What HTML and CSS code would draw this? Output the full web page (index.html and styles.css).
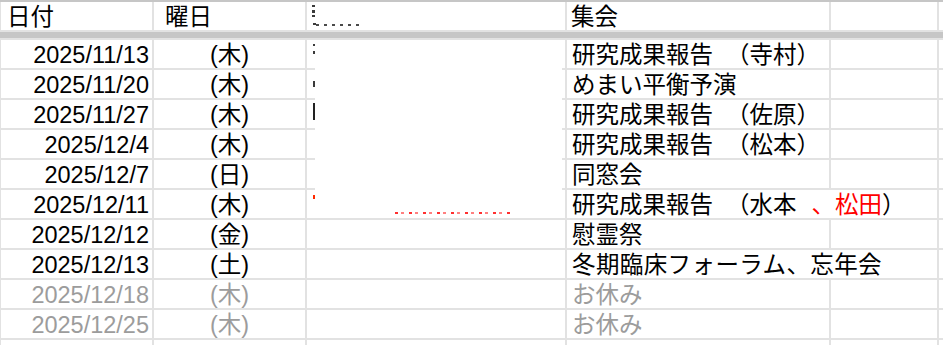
FILE: index.html
```html
<!DOCTYPE html>
<html lang="ja">
<head>
<meta charset="utf-8">
<title>集会予定</title>
<link rel="stylesheet" href="styles.css">
</head>
<body>
<div class="sheet">
  <div class="row">
    <div class="c h1">日付</div>
    <div class="c h2">曜日</div>
    <div class="c"></div>
    <div class="c h4">集会</div>
    <div class="c"></div>
    <div class="c"></div>
  </div>
  <div class="freeze"></div>

  <div class="row">
    <div class="c date">2025/11/13</div><div class="c dow">(木)</div><div class="c"></div>
    <div class="c ev">研究成果報告<span class="sp1">（寺村）</span></div><div class="c"></div><div class="c"></div>
  </div>
  <div class="row">
    <div class="c date">2025/11/20</div><div class="c dow">(木)</div><div class="c"></div>
    <div class="c ev">めまい平衡予演</div><div class="c"></div><div class="c"></div>
  </div>
  <div class="row">
    <div class="c date">2025/11/27</div><div class="c dow">(木)</div><div class="c"></div>
    <div class="c ev">研究成果報告<span class="sp1">（佐原）</span></div><div class="c"></div><div class="c"></div>
  </div>
  <div class="row">
    <div class="c date">2025/12/4</div><div class="c dow">(木)</div><div class="c"></div>
    <div class="c ev">研究成果報告<span class="sp1">（松本）</span></div><div class="c"></div><div class="c"></div>
  </div>
  <div class="row">
    <div class="c date">2025/12/7</div><div class="c dow">(日)</div><div class="c"></div>
    <div class="c ev">同窓会</div><div class="c"></div><div class="c"></div>
  </div>
  <div class="row">
    <div class="c date">2025/12/11</div><div class="c dow">(木)</div><div class="c"></div>
    <div class="c ev wide">研究成果報告<span class="sp1">（水本</span><span class="red sp2">、松田</span>）</div><div class="c"></div>
  </div>
  <div class="row">
    <div class="c date">2025/12/12</div><div class="c dow">(金)</div><div class="c"></div>
    <div class="c ev">慰霊祭</div><div class="c"></div><div class="c"></div>
  </div>
  <div class="row">
    <div class="c date">2025/12/13</div><div class="c dow">(土)</div><div class="c"></div>
    <div class="c ev wide loose">冬期臨床フォーラム、忘年会</div><div class="c"></div>
  </div>
  <div class="row muted">
    <div class="c date">2025/12/18</div><div class="c dow">(木)</div><div class="c"></div>
    <div class="c ev">お休み</div><div class="c"></div><div class="c"></div>
  </div>
  <div class="row muted">
    <div class="c date">2025/12/25</div><div class="c dow">(木)</div><div class="c"></div>
    <div class="c ev">お休み</div><div class="c"></div><div class="c"></div>
  </div>
  <div class="row">
    <div class="c"></div><div class="c"></div><div class="c"></div>
    <div class="c"></div><div class="c"></div><div class="c"></div>
  </div>

  <div class="redact"></div>
  <span class="frag f1"></span>
  <span class="frag f2"></span>
  <span class="frag f3"></span>
  <span class="frag f4"></span>
  <span class="frag f5"></span>
  <span class="frag f6"></span>
  <span class="frag f7"></span>
  <span class="frag f8"></span>
  <span class="frag f9"></span>
  <span class="frag fr1"></span>
  <span class="frag fr2"></span>
</div>
</body>
</html>
```

FILE: styles.css
```css
html, body {
  margin: 0;
  padding: 0;
  background: #ffffff;
}

.sheet {
  position: relative;
  width: 943px;
  height: 343px;
  overflow: hidden;
  border-top: 2px solid #c6c6c6;
  background: #e2e2e2;
  display: flex;
  flex-direction: column;
  gap: 2px;
}

.row {
  flex: none;
  display: grid;
  grid-template-columns: 151px 151px 258px 262px 106px 1fr;
  column-gap: 2px;
  padding-left: 1px;
  height: 28px;
}

.freeze {
  flex: none;
  height: 6px;
  background: #c6c6c6;
}

.c {
  background: #ffffff;
  height: 28px;
  font-family: "Liberation Sans", "Noto Sans CJK JP", sans-serif;
  font-size: 23.5px;
  line-height: 30.5px;
  color: #000000;
  white-space: pre;
  overflow: visible;
}

.h1 { padding-left: 6px; }
.h2 { padding-left: 11px; }
.h4 { padding-left: 4px; }

.date {
  text-align: right;
  padding-right: 3px;
}

.dow {
  text-align: center;
}

.ev {
  padding-left: 5px;
}

/* text that overflows into the next (empty) column hides the border */
.wide {
  grid-column: span 2;
}

.loose {
  letter-spacing: 0.4px;
}

.sp1 { margin-left: 13px; }
.sp2 { margin-left: 15px; }

.red { color: #ff0000; }

.muted .c { color: #9c9c9c; }

/* redacted area of the third column */
.redact {
  position: absolute;
  left: 315px;
  top: 38px;
  width: 247px;
  height: 171px;
  background: #ffffff;
}

.frag {
  position: absolute;
  display: block;
  background: #3a3a3a;
}

.f1 { left: 312px; top: 3px;  width: 3px; height: 2px; }
.f2 { left: 312px; top: 8px;  width: 3px; height: 3px; }
.f3 { left: 312px; top: 13px; width: 3px; height: 2px; }
.f4 { left: 313px; top: 21px; width: 3px; height: 2px; }
.f5 {
  left: 316px; top: 22px; width: 44px; height: 2px;
  background: repeating-linear-gradient(90deg, #4a4a4a 0 3px, transparent 3px 8px);
}
.f6 { left: 313px; top: 42px; width: 2px; height: 2px; }
.f7 { left: 313px; top: 49px; width: 2px; height: 3px; }
.f8 { left: 313px; top: 79px; width: 2px; height: 6px; }
.f9 { left: 313px; top: 101px; width: 2px; height: 17px; background: #222222; }

.fr1 { left: 313px; top: 193px; width: 2px; height: 4px; background: #ff2a00; }
.fr2 {
  left: 395px; top: 210px; width: 118px; height: 2px;
  background: repeating-linear-gradient(90deg, #ff3030 0 3px, transparent 3px 6px, #ff8080 6px 9px, transparent 9px 14px);
}
```
